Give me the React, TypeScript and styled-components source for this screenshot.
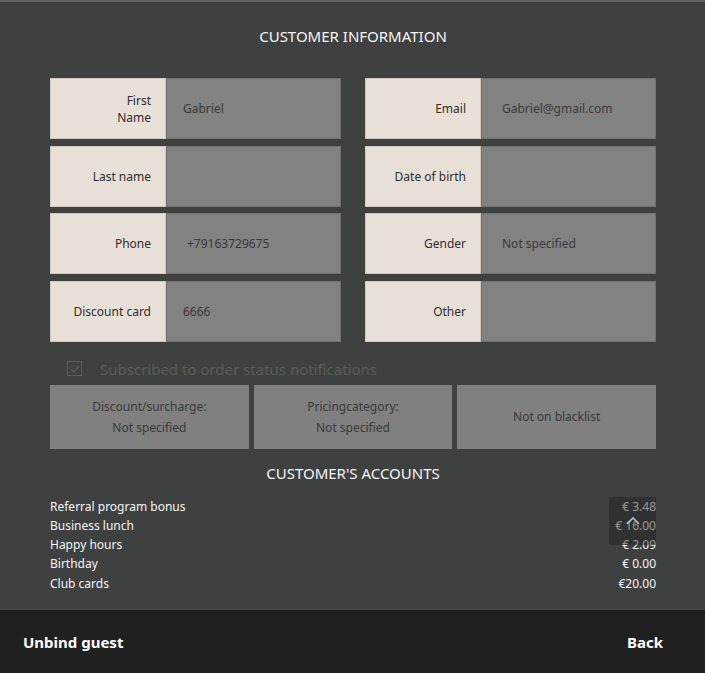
import React from "react";
import styled, { createGlobalStyle } from "styled-components";

const Global = createGlobalStyle`
  html, body { margin: 0; padding: 0; }
  body { background: #3f4140; font-family: "Noto Sans", "Open Sans", sans-serif; }
`;

const Page = styled.div`
  width: 705px;
  height: 673px;
  display: flex;
  flex-direction: column;
  background: #3f4140;
  border-top: 2px solid #5f605f;
  box-sizing: border-box;
  overflow: hidden;
`;

const Content = styled.div`
  flex: 1;
  padding: 0 49px 0 50px;
  display: flex;
  flex-direction: column;
  position: relative;
`;

const Title = styled.h2<{ $top: number; $bottom: number }>`
  margin: ${(p) => p.$top}px 0 ${(p) => p.$bottom}px;
  text-align: center;
  font-weight: 400;
  font-size: 15px;
  line-height: 20px;
  color: #f4f4f4;
  letter-spacing: 0;
`;

const FieldGrid = styled.div`
  display: grid;
  grid-template-columns: 291px 291px;
  column-gap: 24px;
  row-gap: 6.5px;
`;

const Field = styled.div`
  display: flex;
  height: 61px;
`;

const Label = styled.div`
  width: 116px;
  flex: none;
  background: #e8dfd7;
  border: 1px solid #d0c9c3;
  box-sizing: border-box;
  display: flex;
  align-items: center;
  justify-content: flex-end;
  text-align: right;
  padding-right: 14px;
  font-size: 12px;
  line-height: 17px;
  color: #2e2e2e;
`;

const Value = styled.div<{ $pad: number }>`
  flex: 1;
  background: #828282;
  border: 1px solid #707070;
  box-sizing: border-box;
  display: flex;
  align-items: center;
  padding-left: ${(p) => p.$pad}px;
  font-size: 12px;
  color: #3a3a3a;
`;

const CheckRow = styled.div`
  display: flex;
  align-items: center;
  height: 36px;
  margin-top: 9px;
  margin-bottom: -2px;
  padding-left: 17px;
  gap: 18px;
  font-size: 15px;
  color: #5a5c5b;
`;

const CheckBox = styled.div`
  width: 15px;
  height: 15px;
  border: 1px solid #5a5c5b;
  display: flex;
  align-items: center;
  justify-content: center;
  box-sizing: border-box;
`;

const InfoRow = styled.div`
  display: grid;
  grid-template-columns: 1fr 1fr 1fr;
  column-gap: 5px;
  height: 64px;
`;

const InfoBox = styled.div`
  background: #7f807f;
  display: flex;
  flex-direction: column;
  align-items: center;
  justify-content: center;
  gap: 4px;
  font-size: 12px;
  color: #3a3a3a;
  line-height: 17px;
`;

const Accounts = styled.div`
  display: flex;
  flex-direction: column;
  margin-top: 14px;
`;

const AccountRow = styled.div`
  display: flex;
  justify-content: space-between;
  height: 19.3px;
  font-size: 12px;
  line-height: 19px;
  color: #f4f4f4;
`;

const ScrollTop = styled.div`
  position: absolute;
  right: 49px;
  top: 495px;
  width: 47px;
  height: 48px;
  background: rgba(30, 30, 30, 0.45);
  display: flex;
  align-items: center;
  justify-content: center;
`;

const Footer = styled.div`
  height: 63px;
  background: #202020;
  display: flex;
  align-items: center;
  justify-content: space-between;
  padding: 0 42px 0 23px;
  font-weight: 700;
  font-size: 15px;
  color: #ffffff;
`;

const fields: [string, string, number][] = [
  ["First\nName", "Gabriel", 16],
  ["Email", "Gabriel@gmail.com", 20],
  ["Last name", "", 16],
  ["Date of birth", "", 20],
  ["Phone", "+79163729675", 20],
  ["Gender", "Not specified", 20],
  ["Discount card", "6666", 16],
  ["Other", "", 20],
];

const accounts: [string, string][] = [
  ["Referral program bonus", "€ 3.48"],
  ["Business lunch", "€ 16.00"],
  ["Happy hours", "€ 2.09"],
  ["Birthday", "€ 0.00"],
  ["Club cards", "€20.00"],
];

export default function App() {
  return (
    <Page>
      <Global />
      <Content>
        <Title $top={24} $bottom={32}>CUSTOMER INFORMATION</Title>
        <FieldGrid>
          {fields.map(([l, v, pad]) => (
            <Field key={l}>
              <Label>
                {l.split("\n").map((s, i) => (
                  <React.Fragment key={i}>
                    {i > 0 && <br />}
                    {s}
                  </React.Fragment>
                ))}
              </Label>
              <Value $pad={pad}>{v}</Value>
            </Field>
          ))}
        </FieldGrid>
        <CheckRow>
          <CheckBox>
            <svg width="12" height="12" viewBox="0 0 12 12">
              <path d="M2 6.2 L4.8 9 L10 3" fill="none" stroke="#5a5c5b" strokeWidth="1.4" />
            </svg>
          </CheckBox>
          Subscribed to order status notifications
        </CheckRow>
        <InfoRow>
          <InfoBox>
            <span>Discount/surcharge:</span>
            <span>Not specified</span>
          </InfoBox>
          <InfoBox>
            <span>Pricingcategory:</span>
            <span>Not specified</span>
          </InfoBox>
          <InfoBox>
            <span>Not on blacklist</span>
          </InfoBox>
        </InfoRow>
        <Title $top={14} $bottom={0}>CUSTOMER'S ACCOUNTS</Title>
        <Accounts>
          {accounts.map(([n, v]) => (
            <AccountRow key={n}>
              <span>{n}</span>
              <span>{v}</span>
            </AccountRow>
          ))}
        </Accounts>
        <ScrollTop>
          <svg width="20" height="14" viewBox="0 0 20 14">
            <path d="M4 10 L10 4 L16 10" fill="none" stroke="#bdbdbd" strokeWidth="1.6" />
          </svg>
        </ScrollTop>
      </Content>
      <Footer>
        <span>Unbind guest</span>
        <span>Back</span>
      </Footer>
    </Page>
  );
}
